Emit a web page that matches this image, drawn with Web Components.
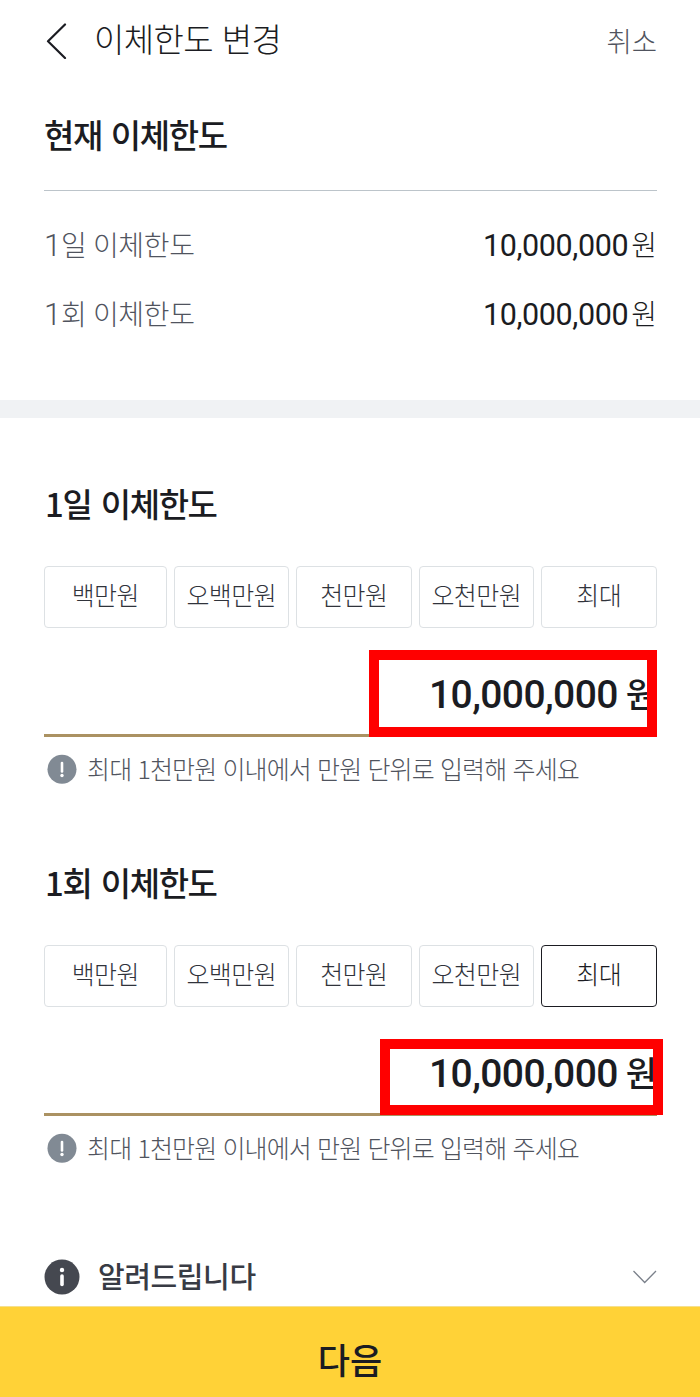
<!DOCTYPE html>
<html lang="ko">
<head>
<meta charset="UTF-8">
<meta name="viewport" content="width=device-width, initial-scale=1.0">
<title>이체한도 변경</title>
<style>
    :root {
        --ink: #1b1c22;
        --text: #30333b;
        --muted: #50545e;
        --line: #dde1e4;
        --gold: #ab9262;
        --number-font: Roboto, "Noto Sans CJK KR", sans-serif;
    }
    body {
        margin: 0;
        background: #fff;
        color: var(--ink);
        font-family: "Noto Sans CJK KR", sans-serif;
        font-weight: 300;
    }
</style>
</head>
<body>
<limit-page>
    <page-header cancel="취소">이체한도 변경</page-header>
    <current-limits heading="현재 이체한도">
        <limit-row label="1일 이체한도" amount="10,000,000"></limit-row>
        <limit-row label="1회 이체한도" amount="10,000,000"></limit-row>
    </current-limits>
    <limit-form class="daily" heading="1일 이체한도" amount="10,000,000">
        <amount-chip>백만원</amount-chip>
        <amount-chip>오백만원</amount-chip>
        <amount-chip>천만원</amount-chip>
        <amount-chip>오천만원</amount-chip>
        <amount-chip>최대</amount-chip>
        <span slot="hint">최대 1천만원 이내에서 만원 단위로 입력해 주세요</span>
    </limit-form>
    <limit-form class="once" heading="1회 이체한도" amount="10,000,000">
        <amount-chip>백만원</amount-chip>
        <amount-chip>오백만원</amount-chip>
        <amount-chip>천만원</amount-chip>
        <amount-chip>오천만원</amount-chip>
        <amount-chip selected>최대</amount-chip>
        <span slot="hint">최대 1천만원 이내에서 만원 단위로 입력해 주세요</span>
    </limit-form>
    <notice-toggle>알려드립니다</notice-toggle>
    <next-button slot="footer">다음</next-button>
</limit-page>

<script>
class LimitPage extends HTMLElement {
    constructor() {
        super();
        this.attachShadow({ mode: 'open' });
    }

    connectedCallback() {
        this.shadowRoot.innerHTML = `
            <style>
                :host {
                    display: flex;
                    flex-direction: column;
                    height: 1397px;
                    overflow: hidden;
                    white-space: nowrap;
                }
                main {
                    flex: 1;
                    min-height: 0;
                }
                ::slotted(limit-form.daily) {
                    --mark-left: 325px;
                    --mark-top: 10px;
                    --mark-width: 288px;
                    --mark-height: 87px;
                }
                ::slotted(limit-form.once) {
                    --mark-left: 336px;
                    --mark-top: 20px;
                    --mark-width: 283px;
                    --mark-height: 76px;
                }
            </style>
            <main><slot></slot></main>
            <slot name="footer"></slot>`;
    }
}

class PageHeader extends HTMLElement {
    constructor() {
        super();
        this.attachShadow({ mode: 'open' });
    }

    connectedCallback() {
        this.shadowRoot.innerHTML = `
            <style>
                :host {
                    display: flex;
                    align-items: center;
                    height: 80px;
                    padding: 0 43px 0 46px;
                }
                svg {
                    width: 22px;
                    height: 38px;
                    margin-right: 26px;
                }
                h1 {
                    flex: 1;
                    margin: 0;
                    font-size: 33px;
                    font-weight: 300;
                    line-height: 48px;
                    letter-spacing: -0.6px;
                    padding-bottom: 5px;
                }
                button {
                    border: 0;
                    padding: 0;
                    background: none;
                    font: inherit;
                    font-size: 27.5px;
                    line-height: 40px;
                    color: var(--muted);
                }
            </style>
            <svg viewBox="0 0 22 38" fill="none" stroke="#1b1c22" stroke-width="2.2" stroke-linecap="round" stroke-linejoin="round">
                <path d="M19 3.5 2 20.3 19 37"/>
            </svg>
            <h1><slot></slot></h1>
            <button>${this.getAttribute('cancel')}</button>`;
    }
}

class CurrentLimits extends HTMLElement {
    constructor() {
        super();
        this.attachShadow({ mode: 'open' });
    }

    connectedCallback() {
        this.shadowRoot.innerHTML = `
            <style>
                :host {
                    display: block;
                    box-sizing: border-box;
                    height: 338px;
                    padding: 30px 43.5px 0 44px;
                    border-bottom: 18px solid #f0f2f4;
                }
                h2 {
                    margin: 0 0 32px;
                    font-size: 33px;
                    font-weight: 500;
                    line-height: 48px;
                    letter-spacing: -1.4px;
                    word-spacing: 1px;
                }
                .rows {
                    border-top: 1px solid #bcc4ca;
                    padding-top: 22px;
                }
            </style>
            <h2>${this.getAttribute('heading')}</h2>
            <div class="rows"><slot></slot></div>`;
    }
}

class LimitRow extends HTMLElement {
    constructor() {
        super();
        this.attachShadow({ mode: 'open' });
    }

    connectedCallback() {
        this.shadowRoot.innerHTML = `
            <style>
                :host {
                    display: flex;
                    justify-content: space-between;
                    align-items: baseline;
                    height: 69px;
                    line-height: 65px;
                }
                .label {
                    font-family: var(--number-font);
                    font-size: 28px;
                    letter-spacing: -0.3px;
                    color: var(--muted);
                }
                .label::first-letter {
                    font-size: 31px;
                    font-weight: 350;
                }
                .amount {
                    font-family: var(--number-font);
                    font-size: 30.5px;
                    font-weight: 400;
                    letter-spacing: -0.4px;
                }
                .unit {
                    font-size: 28px;
                    font-weight: 300;
                    margin-left: 3px;
                }
            </style>
            <div class="label">${this.getAttribute('label')}</div>
            <div class="amount">${this.getAttribute('amount')}<span class="unit">원</span></div>`;
    }
}

class AmountChip extends HTMLElement {
    constructor() {
        super();
        this.attachShadow({ mode: 'open' });
    }

    connectedCallback() {
        this.shadowRoot.innerHTML = `
            <style>
                :host {
                    display: block;
                }
                button {
                    display: block;
                    width: 100%;
                    height: 62px;
                    padding: 0 0 6px;
                    border: 1.5px solid var(--line);
                    border-radius: 4px;
                    background: #fff;
                    color: var(--text);
                    font: inherit;
                    font-size: 25px;
                    letter-spacing: -0.6px;
                    white-space: nowrap;
                }
                :host([selected]) button {
                    border-color: var(--ink);
                    color: var(--ink);
                }
            </style>
            <button><slot></slot></button>`;
    }
}

class LimitForm extends HTMLElement {
    constructor() {
        super();
        this.attachShadow({ mode: 'open' });
    }

    connectedCallback() {
        this.shadowRoot.innerHTML = `
            <style>
                :host {
                    display: block;
                    box-sizing: border-box;
                    height: 379px;
                    padding: 61px 43.5px 0 44px;
                }
                h2 {
                    margin: 0 0 39px 1px;
                    font-size: 33px;
                    font-weight: 500;
                    line-height: 48px;
                    letter-spacing: -1.4px;
                    word-spacing: 1.5px;
                }
                .chips {
                    display: grid;
                    grid-template-columns: 122.5px repeat(4, 1fr);
                    gap: 7px;
                    margin-bottom: 12px;
                }
                .field {
                    position: relative;
                    box-sizing: border-box;
                    height: 97px;
                    padding-top: 27px;
                    border-bottom: 3px solid var(--gold);
                    text-align: right;
                    font-family: var(--number-font);
                    font-size: 39px;
                    font-weight: 500;
                    line-height: 56px;
                    letter-spacing: -0.6px;
                }
                .unit {
                    font-size: 34px;
                    line-height: 1;
                    vertical-align: 1px;
                    margin-left: 8px;
                }
                /* red marker drawn over the field */
                .mark {
                    position: absolute;
                    left: var(--mark-left);
                    top: var(--mark-top);
                    width: var(--mark-width);
                    height: var(--mark-height);
                    box-sizing: border-box;
                    border: 10px solid #f00;
                }
                .hint {
                    display: flex;
                    align-items: center;
                    height: 36px;
                    margin-top: 14px;
                    padding-left: 3px;
                    font-size: 25px;
                    letter-spacing: -0.87px;
                    color: var(--muted);
                }
                .hint svg {
                    width: 30px;
                    height: 30px;
                    margin-right: 10px;
                }
                ::slotted(span) {
                    padding-bottom: 3px;
                }
            </style>
            <h2>${this.getAttribute('heading')}</h2>
            <div class="chips"><slot></slot></div>
            <div class="field">${this.getAttribute('amount')}<span class="unit">원</span><div class="mark"></div></div>
            <div class="hint">
                <svg viewBox="0 0 30 30">
                    <circle cx="15" cy="15.3" r="14.5" fill="#818a94"/>
                    <path d="M15 9v8.5" stroke="#fff" stroke-width="2.6" stroke-linecap="round"/>
                    <circle cx="15" cy="21.5" r="1.7" fill="#fff"/>
                </svg>
                <slot name="hint"></slot>
            </div>`;
    }
}

class NoticeToggle extends HTMLElement {
    constructor() {
        super();
        this.attachShadow({ mode: 'open' });
    }

    connectedCallback() {
        this.shadowRoot.innerHTML = `
            <style>
                :host {
                    display: flex;
                    align-items: center;
                    height: 50px;
                    margin-top: 76px;
                    padding: 0 43px 0 44px;
                    font-size: 29px;
                    font-weight: 500;
                    color: #383b44;
                }
                .info {
                    width: 36px;
                    height: 36px;
                    margin-right: 18px;
                }
                .label {
                    flex: 1;
                    letter-spacing: -0.4px;
                    padding-bottom: 4px;
                }
                .arrow {
                    width: 24px;
                    height: 14px;
                }
            </style>
            <svg class="info" viewBox="0 0 36 36">
                <circle cx="18" cy="18" r="17.5" fill="#454850"/>
                <circle cx="18" cy="11" r="2.2" fill="#fff"/>
                <path d="M18 17v8.5" stroke="#fff" stroke-width="3.6" stroke-linecap="round"/>
            </svg>
            <span class="label"><slot></slot></span>
            <svg class="arrow" viewBox="0 0 24 14" fill="none" stroke="#7b818b" stroke-width="1.3">
                <path d="M.5 1 11.7 12.5 23 1"/>
            </svg>`;
    }
}

class NextButton extends HTMLElement {
    constructor() {
        super();
        this.attachShadow({ mode: 'open' });
    }

    connectedCallback() {
        this.shadowRoot.innerHTML = `
            <style>
                :host {
                    display: block;
                }
                button {
                    display: block;
                    width: 100%;
                    height: 91px;
                    padding: 13px 0 0;
                    border: 0;
                    border-top: 1px solid #f5e08e;
                    background: #ffd237;
                    color: var(--ink);
                    font: inherit;
                    font-size: 35px;
                    font-weight: 500;
                }
            </style>
            <button><slot></slot></button>`;
    }
}

customElements.define('limit-page', LimitPage);
customElements.define('page-header', PageHeader);
customElements.define('current-limits', CurrentLimits);
customElements.define('limit-row', LimitRow);
customElements.define('amount-chip', AmountChip);
customElements.define('limit-form', LimitForm);
customElements.define('notice-toggle', NoticeToggle);
customElements.define('next-button', NextButton);
</script>
</body>
</html>
